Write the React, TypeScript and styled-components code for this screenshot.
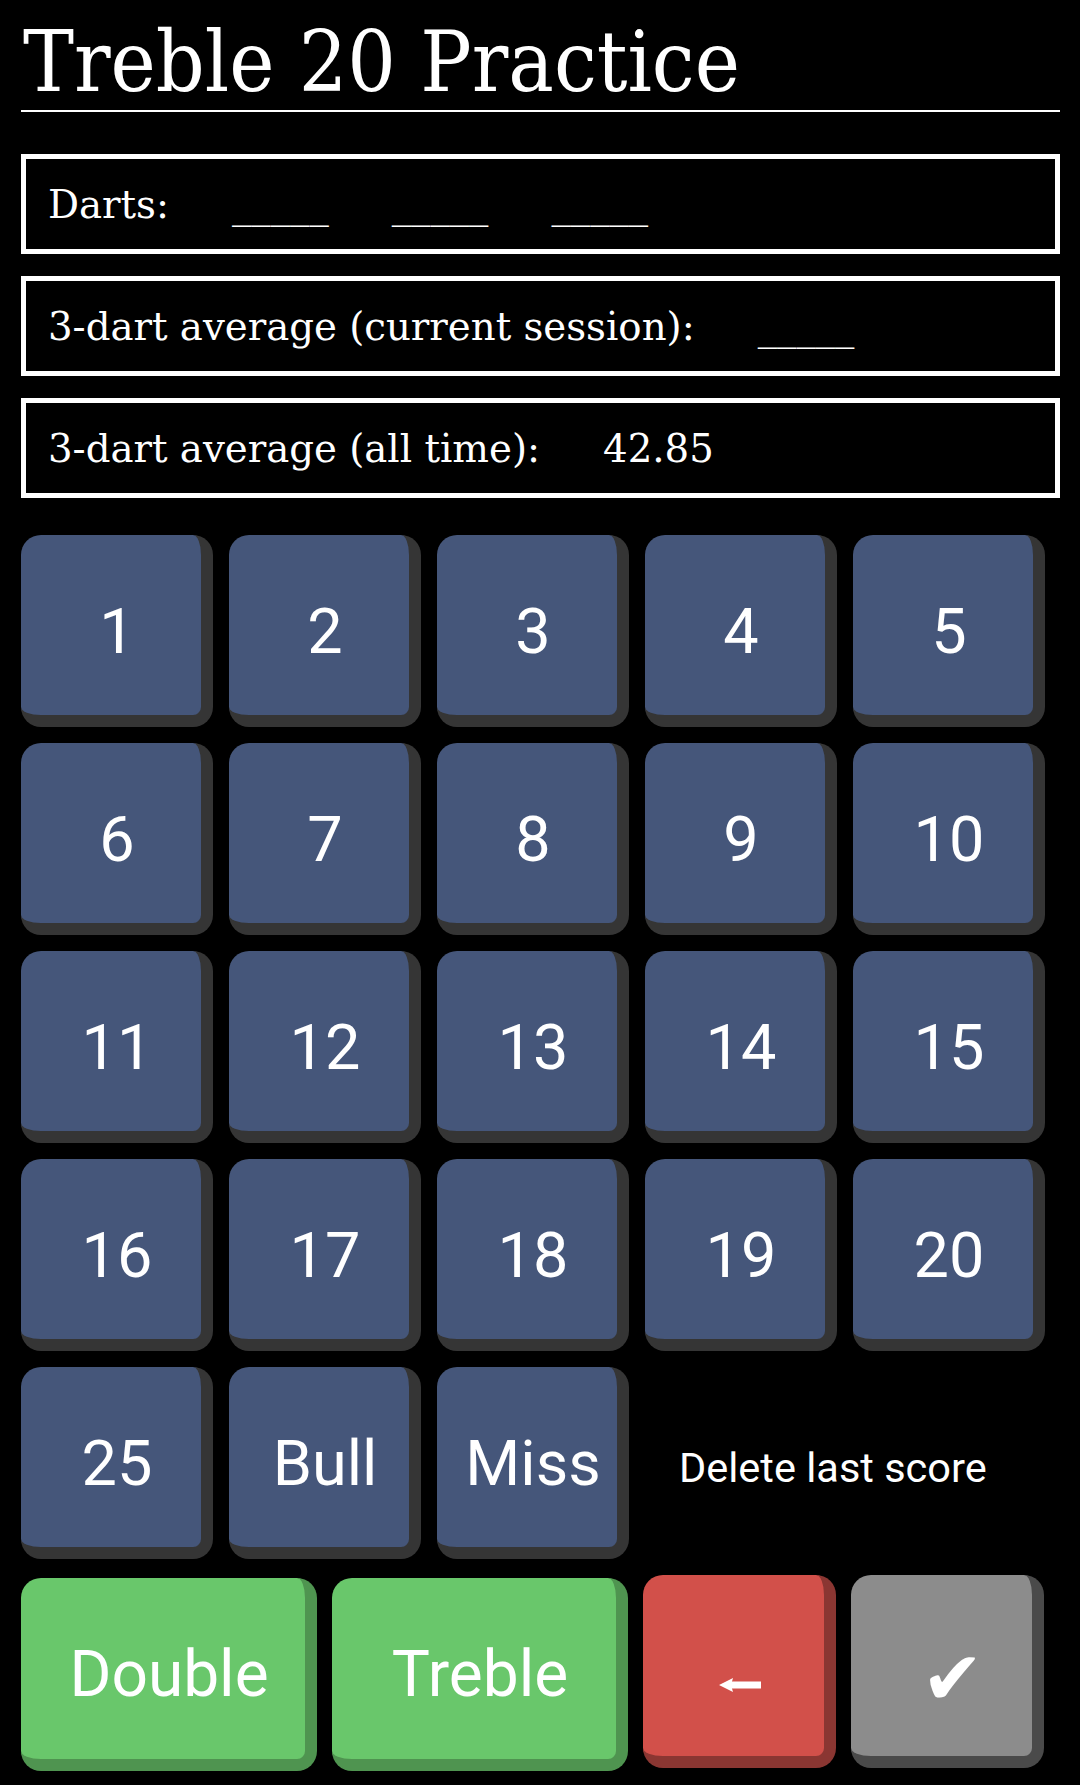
import React from "react";
import styled, { createGlobalStyle } from "styled-components";

const GlobalStyle = createGlobalStyle`
  html, body {
    margin: 0;
    padding: 0;
    background: #000;
  }
  body {
    font-family: "DejaVu Serif", serif;
    color: #fff;
  }
`;

const Page = styled.div`
  width: 1080px;
  min-height: 1785px;
  box-sizing: border-box;
  padding: 0 20px 0 21px;
  background: #000;
  display: flex;
  flex-direction: column;
`;

const Title = styled.h1`
  margin: 0;
  padding: 19px 0 6px 2px;
  font-family: "DejaVu Serif", serif;
  font-stretch: condensed;
  font-weight: 400;
  font-size: 85px;
  line-height: 85px;
  color: #fff;
  border-bottom: 2px solid #fff;
  white-space: nowrap;
`;

const InfoList = styled.div`
  display: flex;
  flex-direction: column;
  gap: 22px;
  margin-top: 42px;
`;

const InfoBox = styled.div`
  box-sizing: border-box;
  height: 100px;
  border: 5px solid #fff;
  padding: 0 22px;
  display: flex;
  align-items: center;
  gap: 63px;
  font-family: "DejaVu Serif", serif;
  font-size: 38.7px;
  line-height: 47px;
  color: #fff;
  white-space: nowrap;
`;

const Keypad = styled.div`
  margin-top: 37px;
  display: grid;
  grid-template-columns: repeat(5, 192px);
  grid-auto-rows: 192px;
  gap: 16px;
`;

type Tone = "blue" | "green" | "red" | "gray";

const tones: Record<Tone, { face: string; edge: string }> = {
  blue: { face: "#45567a", edge: "#353535" },
  green: { face: "#69c76b", edge: "#4f9450" },
  red: { face: "#d2504a", edge: "#8a3632" },
  gray: { face: "#8c8c8c", edge: "#4a4a4a" },
};

const Key = styled.button<{ $tone: Tone; $size?: number; $drop?: number }>`
  box-sizing: border-box;
  width: 100%;
  height: 193px;
  margin: ${(p) => (p.$drop ? `${p.$drop}px` : "0")} 0 0 0;
  padding: 12px 0 0 12px;
  border: 0;
  border-right: 12px solid ${(p) => tones[p.$tone].edge};
  border-bottom: 12px solid ${(p) => tones[p.$tone].edge};
  border-radius: 20px;
  background: ${(p) => tones[p.$tone].face};
  color: #fff;
  font-family: Roboto, "Liberation Sans", sans-serif;
  font-size: ${(p) => p.$size ?? 63}px;
  font-weight: 400;
  line-height: 1;
  display: flex;
  align-items: center;
  justify-content: center;
  cursor: pointer;
`;

const NumKey = styled(Key)`
  height: 192px;
`;

const DeleteLabel = styled.div`
  grid-column: span 2;
  display: flex;
  align-items: center;
  padding: 8px 0 0 34px;
  font-family: Roboto, "Liberation Sans", sans-serif;
  font-size: 41.5px;
  color: #fff;
  white-space: nowrap;
`;

const ActionRow = styled.div`
  margin-top: 16px;
  display: grid;
  grid-template-columns: 296px 296px 193px 193px;
  column-gap: 15px;
  align-items: start;
`;

const ArrowIcon = styled.svg`
  width: 42px;
  height: 14px;
  margin: 26px 0 0 0;
  display: block;
`;

const Check = styled.span`
  font-family: "DejaVu Sans", sans-serif;
  font-size: 74px;
  line-height: 1;
  margin: 12px 0 0 10px;
`;

const numbers = Array.from({ length: 20 }, (_, i) => String(i + 1));

export default function App() {
  return (
    <>
      <GlobalStyle />
      <Page>
        <Title>Treble 20 Practice</Title>
        <InfoList>
          <InfoBox>
            <span>Darts:</span>
            <span>_____</span>
            <span>_____</span>
            <span>_____</span>
          </InfoBox>
          <InfoBox>
            <span>3-dart average (current session):</span>
            <span>_____</span>
          </InfoBox>
          <InfoBox>
            <span>3-dart average (all time):</span>
            <span>42.85</span>
          </InfoBox>
        </InfoList>
        <Keypad>
          {numbers.map((n) => (
            <NumKey key={n} $tone="blue">
              {n}
            </NumKey>
          ))}
          <NumKey $tone="blue">25</NumKey>
          <NumKey $tone="blue">Bull</NumKey>
          <NumKey $tone="blue">Miss</NumKey>
          <DeleteLabel>Delete last score</DeleteLabel>
        </Keypad>
        <ActionRow>
          <Key $tone="green" $size={64} $drop={3}>
            Double
          </Key>
          <Key $tone="green" $size={64} $drop={3}>
            Treble
          </Key>
          <Key $tone="red" aria-label="Delete last score">
            <ArrowIcon viewBox="0 0 42 14">
              <polygon points="0,7 14,0 12,7 14,14" fill="#fff" />
              <rect x="11" y="3.5" width="31" height="7" fill="#fff" />
            </ArrowIcon>
          </Key>
          <Key $tone="gray" aria-label="Confirm">
            <Check>✔</Check>
          </Key>
        </ActionRow>
      </Page>
    </>
  );
}
